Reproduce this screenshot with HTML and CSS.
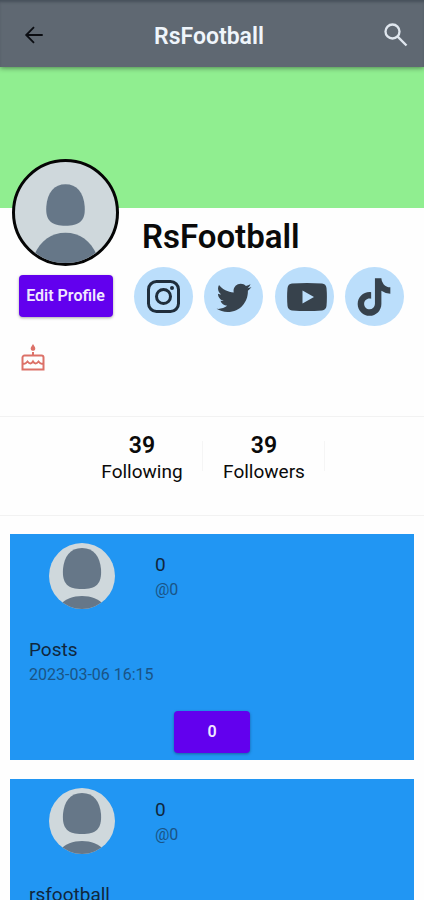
FILE: index.html
```html
<!DOCTYPE html>
<html lang="en">
<head>
<meta charset="utf-8">
<meta name="viewport" content="width=device-width, initial-scale=1">
<title>RsFootball</title>
<link rel="stylesheet" href="styles.css">
</head>
<body>
<svg class="defs" aria-hidden="true">
  <symbol id="person" viewBox="0 0 100 100">
    <path d="M50 22c11 0 18 8 19 22c1 15-6 19-19 19s-20-4-19-19c1-14 8-22 19-22z"/>
    <path d="M19 92c6-14 17-22 31-22s25 8 31 22v12H19z"/>
  </symbol>
  <symbol id="person-close" viewBox="0 0 66 66">
    <path d="M33 5c12 0 18 9 19 21c1 15-5 20-19 20s-20-5-19-20c1-12 7-21 19-21z"/>
    <path d="M11 62c5-6 13-9 22-9s17 3 22 9v6H11z"/>
  </symbol>
</svg>
<div class="app">
  <header class="bar">
    <button class="bar-button" type="button" aria-label="Back">
      <svg viewBox="0 0 24 24" class="icon-back"><path d="M21.500 12H3.500M12 3.500L3.500 12l8.500 8.500"/></svg>
    </button>
    <h1 class="bar-title">RsFootball</h1>
    <button class="bar-button search" type="button" aria-label="Search">
      <svg viewBox="0 0 24 24" class="icon-search"><circle cx="9" cy="9" r="6"/><path d="M13 13l8 8"/></svg>
    </button>
  </header>
  <main>
    <div class="banner"></div>
    <section class="profile">
      <div class="profile-side">
        <div class="avatar"><svg><use href="#person"/></svg></div>
        <button class="button edit" type="button">Edit Profile</button>
      </div>
      <div class="profile-main">
        <h2 class="name">RsFootball</h2>
        <nav class="socials">
          <a class="social" href="#instagram" aria-label="Instagram">
            <svg viewBox="0 0 34 34" class="icon-instagram"><rect x="1.500" y="1.500" width="30" height="30" rx="8"/><circle cx="16.500" cy="16.500" r="7"/><circle class="dot" cx="25" cy="8" r="2"/></svg>
          </a>
          <a class="social" href="#twitter" aria-label="Twitter">
            <svg viewBox="0 0 24 24" class="icon-twitter"><path d="M22.46 6C21.69 6.350 20.860 6.580 20 6.690C20.880 6.160 21.560 5.320 21.880 4.310C21.050 4.810 20.130 5.160 19.160 5.360C18.370 4.500 17.260 4 16 4C13.650 4 11.730 5.920 11.730 8.290C11.730 8.630 11.770 8.960 11.840 9.270C8.280 9.090 5.110 7.380 3 4.790C2.630 5.420 2.420 6.160 2.420 6.940C2.420 8.430 3.170 9.750 4.330 10.500C3.620 10.500 2.960 10.300 2.380 10V10.030C2.380 12.110 3.860 13.850 5.820 14.240C5.460 14.340 5.080 14.390 4.690 14.390C4.420 14.390 4.150 14.360 3.890 14.310C4.430 16 6 17.260 7.890 17.290C6.430 18.450 4.580 19.130 2.560 19.130C2.220 19.130 1.880 19.110 1.540 19.070C3.440 20.290 5.700 21 8.120 21C16 21 20.330 14.460 20.330 8.790C20.330 8.600 20.330 8.420 20.320 8.230C21.160 7.630 21.880 6.870 22.460 6Z"/></svg>
          </a>
          <a class="social" href="#youtube" aria-label="YouTube">
            <svg viewBox="-5 0 45 28" class="icon-youtube"><path fill-rule="evenodd" d="M5 .6Q20-.4 35 .6Q39 1 39.500 5Q40.300 14 39.500 23Q39 27 35 27.400Q20 28.400 5 27.400Q1 27 .5 23Q-.3 14 .5 5Q1 1 5 .6ZM15.500 7.500v13L27 14z"/></svg>
          </a>
          <a class="social" href="#tiktok" aria-label="TikTok">
            <svg viewBox="0 0 24 24" class="icon-tiktok"><path d="M16.600 5.820A4.278 4.278 0 0 1 15.540 3h-3.090v12.400a2.592 2.592 0 0 1-2.590 2.500c-1.420 0-2.600-1.160-2.600-2.600 0-1.720 1.660-3.010 3.370-2.480V9.660c-3.450-.46-6.470 2.220-6.470 5.640 0 3.330 2.760 5.700 5.690 5.700 3.140 0 5.690-2.550 5.690-5.700V9.010a7.350 7.350 0 0 0 4.300 1.380V7.300s-1.880.09-3.240-1.480z"/></svg>
          </a>
        </nav>
      </div>
    </section>
    <div class="birthday">
      <svg viewBox="0 0 24 28" role="img" aria-label="Birthday"><path class="flame" d="M12 1c2 3 2.600 4 2.200 5.200c-.6 2-3.800 2-4.400 0C9.400 5 10 4 12 1z"/><path d="M12 9v3M3.500 12.500h17a2 2 0 0 1 2 2v12h-21v-12a2 2 0 0 1 2-2zM1.500 20c2 1.500 3 1 5-1.500c2 2.500 4 2.500 5.500 0c1.500 2.500 3.500 2.500 5.500 0c2 2.500 3 3 5 1.500"/></svg>
    </div>
    <section class="stats">
      <a class="stat" href="#following"><strong>39</strong><span>Following</span></a>
      <a class="stat" href="#followers"><strong>39</strong><span>Followers</span></a>
    </section>
    <section class="feed">
      <article class="post">
        <div class="post-head">
          <div class="post-avatar"><svg><use href="#person-close"/></svg></div>
          <div class="post-author"><span>0</span><span class="muted">@0</span></div>
        </div>
        <div class="post-body"><span>Posts</span><time class="muted">2023-03-06 16:15</time></div>
        <button class="button count" type="button">0</button>
      </article>
      <article class="post">
        <div class="post-head">
          <div class="post-avatar"><svg><use href="#person-close"/></svg></div>
          <div class="post-author"><span>0</span><span class="muted">@0</span></div>
        </div>
        <div class="post-body"><span>rsfootball</span></div>
      </article>
    </section>
  </main>
</div>
</body>
</html>
```
FILE: styles.css
```css
* {
  box-sizing: border-box;
}

body {
  margin: 0;
  background: #fefefe;
  color: #0a0a0a;
  font-family: Roboto, "Liberation Sans", sans-serif;
}

svg {
  display: block;
}

.defs {
  position: absolute;
  width: 0;
  height: 0;
}

.app {
  height: 100vh;
  overflow: hidden;
}

.bar {
  position: relative;
  display: flex;
  align-items: center;
  justify-content: space-between;
  padding: 13px 14px 7px 12px;
  background: #5f6872;
  box-shadow: inset 0 3px 3px -1px #46505a, 0 1px 5px rgba(0, 0, 0, 0.45);
}

.bar-button {
  display: grid;
  place-items: center;
  width: 44px;
  height: 47px;
  padding: 0 0 4px;
  border: 0;
  background: none;
}

.search {
  justify-items: end;
  width: 48px;
}

.icon-back,
.icon-search {
  fill: none;
  stroke-width: 2;
}

.icon-back {
  width: 22px;
  height: 22px;
  stroke: #0b0d12;
}

.icon-search {
  width: 28px;
  height: 28px;
  stroke: #dfe6ee;
}

.bar-title {
  margin: 0;
  color: #eff5fb;
  font-size: 23px;
  line-height: 47px;
  font-weight: 600;
}

.banner {
  height: 141px;
  background: #90ee90;
}

.profile {
  display: flex;
  padding: 0 20px 0 12px;
}

.profile-side {
  display: flex;
  flex-direction: column;
  align-items: center;
  gap: 9px;
  width: 107px;
  margin-top: -49px;
}

.avatar {
  width: 107px;
  height: 107px;
  overflow: hidden;
  border: 3px solid #050505;
  border-radius: 50%;
  background: #cfd8dc;
}

.avatar svg,
.post-avatar svg {
  width: 100%;
  height: 100%;
  fill: #667788;
}

.button {
  height: 42px;
  padding: 0;
  border: 0;
  border-radius: 4px;
  background: #6200ee;
  box-shadow: 0 1px 3px rgba(0, 0, 0, 0.35);
  color: #f0e8ff;
  font: 600 16px/42px Roboto, "Liberation Sans", sans-serif;
}

.edit {
  width: 94px;
}

.profile-main {
  flex: 1;
  padding-left: 15px;
}

.name {
  margin: 9px 0 10px 8px;
  font-size: 33px;
  line-height: 40px;
  font-weight: 600;
}

.socials {
  display: flex;
  justify-content: space-between;
}

.social {
  display: grid;
  place-items: center;
  width: 59px;
  height: 59px;
  border-radius: 50%;
  background: #bbdefb;
  fill: #37424c;
}

.icon-instagram {
  width: 34px;
  height: 34px;
  fill: none;
  stroke: #1f2d3b;
  stroke-width: 3;
}

.icon-instagram .dot {
  fill: #1f2d3b;
  stroke: none;
}

.icon-twitter {
  width: 40px;
  height: 40px;
}

.icon-youtube {
  width: 45px;
  height: 28px;
}

.icon-tiktok {
  width: 50px;
  height: 50px;
}

.birthday {
  height: 90px;
  padding: 17px 21px;
}

.birthday svg {
  width: 24px;
  height: 28px;
  fill: none;
  stroke: #dc7168;
  stroke-width: 2;
}

.birthday .flame {
  fill: #dc7168;
  stroke: none;
}

.stats {
  display: flex;
  justify-content: center;
  height: 100px;
  padding: 16px 18px 0 0;
  border: solid #f2f2f2;
  border-width: 1px 0;
}

.stat {
  display: flex;
  flex-direction: column;
  align-items: center;
  width: 122px;
  height: 50px;
  color: inherit;
  text-decoration: none;
  background: linear-gradient(#f5f5f5, #f5f5f5) right 8px / 1px 30px no-repeat;
}

.stat strong {
  font-size: 23px;
  line-height: 26px;
  font-weight: 600;
}

.stat span {
  font-size: 19px;
  line-height: 26px;
}

.feed {
  display: grid;
  gap: 19px;
  padding: 18px 10px;
}

.post {
  display: flex;
  flex-direction: column;
  height: 226px;
  padding: 9px 19px 7px;
  background: #2196f3;
  color: #10273d;
  font-size: 19px;
  line-height: 25px;
}

.post-head {
  display: flex;
  gap: 40px;
  padding-left: 20px;
}

.post-avatar {
  width: 66px;
  height: 66px;
  overflow: hidden;
  border-radius: 50%;
  background: #cfd8dc;
}

.post-author,
.post-body {
  display: flex;
  flex-direction: column;
}

.post-author {
  padding-top: 9px;
}

.post-body {
  padding-top: 28px;
}

.muted {
  color: #1a5486;
  font-size: 16px;
}

.count {
  align-self: center;
  width: 76px;
  margin-top: auto;
}
```
